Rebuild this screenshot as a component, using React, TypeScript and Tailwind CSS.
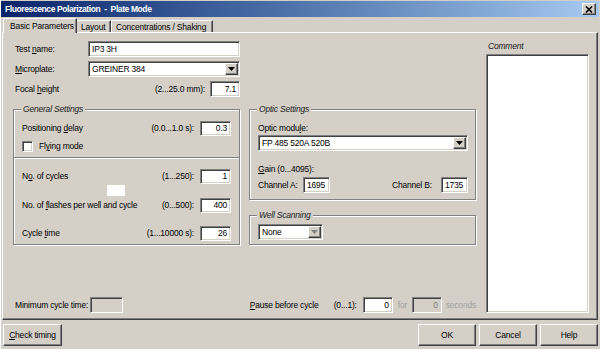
import type { ReactNode } from 'react'

const sunken =
  'border border-t-[#808080] border-l-[#808080] border-b-white border-r-white shadow-[inset_1px_1px_0_#404040,inset_-1px_-1px_0_#d4d0c8]'
const raised =
  'border border-t-white border-l-white border-r-[#404040] border-b-[#404040] shadow-[inset_-1px_-1px_0_#808080]'
const etched =
  'border border-[#808080] shadow-[inset_1px_1px_0_#ffffff,1px_1px_0_#ffffff]'

const Field = ({
  value,
  className = '',
  align = 'right',
  disabled = false,
}: {
  value?: string
  className?: string
  align?: 'left' | 'right'
  disabled?: boolean
}) => (
  <div
    className={`${sunken} ${className} flex items-center ${
      disabled ? 'bg-[#d4d0c8] text-[#808080]' : 'bg-white text-black'
    } ${align === 'right' ? 'justify-end pr-[3px]' : 'justify-start pl-[3px]'}`}
  >
    {value}
  </div>
)

const Arrow = ({ disabled = false }: { disabled?: boolean }) => (
  <div
    className={`${raised} bg-[#d4d0c8] w-[13px] h-full flex items-center justify-center`}
  >
    <svg width="7" height="4" viewBox="0 0 7 4">
      <path d="M0 0h7L3.5 4z" fill={disabled ? '#808080' : '#000'} />
    </svg>
  </div>
)

const Combo = ({
  value,
  className = '',
  disabled = false,
}: {
  value: string
  className?: string
  disabled?: boolean
}) => (
  <div className={`${sunken} ${className} bg-white flex items-stretch p-[1px]`}>
    <div className="flex-1 flex items-center pl-[2px]">{value}</div>
    <Arrow disabled={disabled} />
  </div>
)

const Group = ({
  title,
  className = '',
  children,
}: {
  title: string
  className?: string
  children: ReactNode
}) => (
  <div className={`${etched} relative ${className}`}>
    <span className="absolute -top-[7px] left-[7px] bg-[#d4d0c8] px-[2px] italic text-[#202020] leading-[12px]">
      {title}
    </span>
    {children}
  </div>
)

const RangeRow = ({
  label,
  range,
  value,
}: {
  label: ReactNode
  range: string
  value: string
}) => (
  <div className="flex h-[15px] items-center pl-[8px] pr-[8px]">
    <span className="flex-1">{label}</span>
    <span className="mr-[6px]">{range}</span>
    <Field value={value} className="w-[31px] h-[15px]" />
  </div>
)

const Button = ({
  children,
  className = '',
}: {
  children: ReactNode
  className?: string
}) => (
  <div
    className={`${raised} bg-[#d4d0c8] h-[22px] flex items-center justify-center ${className}`}
  >
    {children}
  </div>
)

export default function App() {
  return (
    <div className="w-[600px] h-[349px] overflow-hidden whitespace-nowrap bg-[#d4d0c8] text-black text-[8.5px] leading-[11px] tracking-[-0.2px] font-['Liberation_Sans',Arial,sans-serif] pt-[1px] border-l border-white">
      {/* title bar */}
      <div className="h-[16px] mr-[1px] flex items-center justify-between pl-[4px] pr-[3px] bg-gradient-to-r from-[#0a246a] to-[#a6caf0]">
        <span className="text-white font-bold text-[8.5px] tracking-[-0.4px]">
          Fluorescence Polarization&nbsp; -&nbsp; Plate Mode
        </span>
        <div
          className={`${raised} bg-[#d4d0c8] w-[14px] h-[12px] flex items-center justify-center`}
        >
          <svg width="8" height="7" viewBox="0 0 8 7">
            <path
              d="M1 0.5l6 6M7 0.5l-6 6"
              stroke="#000"
              strokeWidth="1.6"
            />
          </svg>
        </div>
      </div>

      {/* tabs */}
      <div className="h-[15px] flex items-start pl-[2px]">
        <div className="relative z-10 mt-[1px] h-[15px] w-[74px] bg-[#d4d0c8] border-t border-l border-white border-r border-r-[#404040] shadow-[inset_-1px_0_0_#808080] pl-[6px] pt-[2px]">
          Basic Parameters
        </div>
        <div className="mt-[3px] h-[12px] w-[34px] border-t border-white border-r border-r-[#404040] shadow-[inset_-1px_0_0_#808080] pl-[4px] pt-[1px]">
          Layout
        </div>
        <div className="mt-[3px] h-[12px] w-[102px] border-t border-l border-white border-r border-r-[#404040] shadow-[inset_-1px_0_0_#808080] pl-[4px] pt-[1px]">
          Concentrations / Shaking
        </div>
      </div>

      {/* panel */}
      <div className="ml-[1px] w-[596px] h-[288px] border-t border-l border-white border-r border-b border-r-[#404040] border-b-[#404040] shadow-[inset_-1px_-1px_0_#808080] flex pl-[10px] pr-[6px]">
        <div className="w-[463px] flex flex-col pt-[8px] pb-[6px]">
          <div className="w-[227px]">
            <div className="flex h-[16px] items-center">
              <span className="w-[75px] pl-[2px]">
                Test <u>n</u>ame:
              </span>
              <Field
                value="IP3 3H"
                align="left"
                className="w-[152px] h-[16px]"
              />
            </div>
            <div className="flex h-[16px] items-center mt-[4px]">
              <span className="w-[75px] pl-[2px]">
                <u>M</u>icroplate:
              </span>
              <Combo value="GREINER 384" className="w-[152px] h-[16px]" />
            </div>
            <div className="flex h-[16px] items-center mt-[4px]">
              <span className="flex-1 pl-[2px]">
                Focal <u>h</u>eight
              </span>
              <span className="mr-[5px]">(2...25.0 mm):</span>
              <Field value="7.1" className="w-[30px] h-[16px]" />
            </div>
          </div>

          <div className="flex gap-[9px] mt-[12px]">
            <Group title="General Settings" className="w-[227px] h-[136px]">
              <div className="pt-[11px]">
                <RangeRow
                  label={
                    <>
                      Positioning <u>d</u>elay
                    </>
                  }
                  range="(0.0...1.0 s):"
                  value="0.3"
                />
                <div className="flex items-center h-[11px] mt-[5px] pl-[8px]">
                  <div className={`${sunken} bg-white w-[11px] h-[11px]`} />
                  <span className="ml-[6px]">
                    Fl<u>y</u>ing mode
                  </span>
                </div>
                <div className="mt-[5px] h-[2px] border-t border-[#808080] border-b border-b-white" />
                <div className="mt-[10px]">
                  <RangeRow
                    label={
                      <>
                        N<u>o</u>. of cycles
                      </>
                    }
                    range="(1...250):"
                    value="1"
                  />
                  <div className="h-[11px] mt-[1px] mb-[2px] pl-[93px]">
                    <div className="w-[18px] h-[11px] bg-white" />
                  </div>
                  <RangeRow
                    label={
                      <>
                        No. of <u>f</u>lashes per well and cycle
                      </>
                    }
                    range="(0...500):"
                    value="400"
                  />
                  <div className="h-[13px]" />
                  <RangeRow
                    label={
                      <>
                        Cycle <u>t</u>ime
                      </>
                    }
                    range="(1...10000 s):"
                    value="26"
                  />
                </div>
              </div>
            </Group>

            <div className="w-[227px] flex flex-col">
              <Group title="Optic Settings" className="h-[91px]">
                <div className="pl-[8px] pr-[7px] pt-[13px]">
                  <div className="h-[11px]">
                    Optic modu<u>l</u>e:
                  </div>
                  <Combo
                    value="FP 485 520A 520B"
                    className="w-full h-[16px] mt-[1px]"
                  />
                  <div className="h-[11px] mt-[13px]">
                    <u>G</u>ain (0...4095):
                  </div>
                  <div className="flex items-center h-[16px] mt-[2px]">
                    <span className="w-[45px]">Channel A:</span>
                    <Field value="1695" align="left" className="w-[27px] h-[16px]" />
                    <span className="flex-1" />
                    <span className="mr-[9px]">Channel B:</span>
                    <Field value="1735" align="left" className="w-[27px] h-[16px]" />
                  </div>
                </div>
              </Group>
              <Group title="Well Scanning" className="h-[30px] mt-[15px]">
                <div className="pl-[8px] pt-[8px]">
                  <Combo value="None" disabled className="w-[65px] h-[16px]" />
                </div>
              </Group>
            </div>
          </div>

          <div className="mt-auto flex items-center h-[16px]">
            <div className="w-[236px] flex items-center">
              <span className="w-[77px] pl-[2px]">Minimum cycle time:</span>
              <Field disabled className="w-[33px] h-[16px]" />
            </div>
            <div className="flex items-center pl-[1px]">
              <span className="w-[84px]">
                <u>P</u>ause before cycle
              </span>
              <span className="w-[29px]">(0...1):</span>
              <Field value="0" className="w-[30px] h-[16px]" />
              <span className="ml-[5px] w-[14px] text-[#a0a0a0]">for</span>
              <Field value="0" disabled className="w-[30px] h-[16px]" />
              <span className="ml-[4px] text-[#a0a0a0]">seconds</span>
            </div>
          </div>
        </div>

        <div className="ml-[10px] w-[103px] flex flex-col pt-[8px] pb-[6px]">
          <div className="h-[11px] pl-[2px] italic text-[#202020]">Comment</div>
          <div className={`${sunken} bg-white flex-1 mt-[2px]`} />
        </div>
      </div>

      {/* buttons */}
      <div className="flex pt-[4px] pl-[2px] pr-[2px]">
        <Button className="w-[59px]">
          <span>
            <u>C</u>heck timing
          </span>
        </Button>
        <div className="ml-auto flex gap-[3px]">
          <Button className="w-[58px]">OK</Button>
          <Button className="w-[58px]">Cancel</Button>
          <Button className="w-[58px]">Help</Button>
        </div>
      </div>
    </div>
  )
}
